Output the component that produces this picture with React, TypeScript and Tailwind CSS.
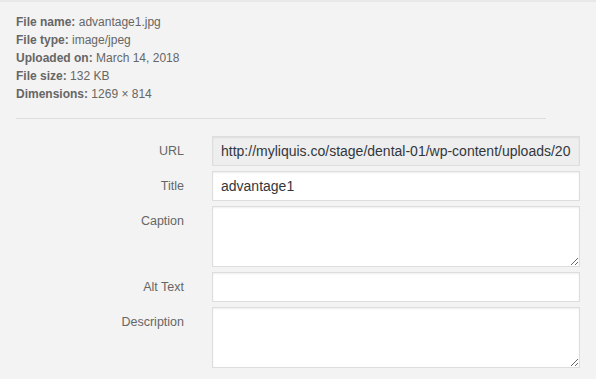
import React from 'react';

const meta: [string, string][] = [
  ['File name:', 'advantage1.jpg'],
  ['File type:', 'image/jpeg'],
  ['Uploaded on:', 'March 14, 2018'],
  ['File size:', '132 KB'],
  ['Dimensions:', '1269 × 814'],
];

const inputClass =
  'w-full h-[30px] px-2 border border-[#ddd] text-[14px] text-[#32373c] shadow-[inset_0_1px_2px_rgba(0,0,0,0.07)] outline-none';
const areaClass =
  'block w-full h-[61px] px-2 py-1 border border-[#ddd] bg-white text-[14px] text-[#32373c] shadow-[inset_0_1px_2px_rgba(0,0,0,0.07)] outline-none';

const Row: React.FC<{ label: string; children: React.ReactNode }> = ({ label, children }) => (
  <div className="flex items-start">
    <label className="w-[184px] shrink-0 text-right pt-[7px] leading-4 text-[12.5px] text-[#666]">{label}</label>
    <div className="ml-[28px] w-[368px]">{children}</div>
  </div>
);

export default function App() {
  return (
    <div
      className="w-[596px] h-[379px] overflow-hidden bg-[#f3f3f3] border-t-2 border-[#e8e8e8]"
      style={{ fontFamily: '"Liberation Sans", Arial, sans-serif' }}
    >
      {/* File details */}
      <div className="pt-[11px] px-4 text-[12px] leading-[18px] text-[#666]">
        {meta.map(([k, v]) => (
          <div key={k}>
            <span className="font-bold">{k}</span> {v}
          </div>
        ))}
      </div>

      <div className="mx-4 mt-[15px] w-[530px] border-t border-[#ddd]" />

      {/* Attachment fields */}
      <div className="mt-[17px] flex flex-col gap-[5px]">
        <Row label="URL">
          <input
            readOnly
            className={`${inputClass} bg-[#eee]`}
            value="http://myliquis.co/stage/dental-01/wp-content/uploads/2018/03/advantage1.jpg"
          />
        </Row>
        <Row label="Title">
          <input readOnly className={`${inputClass} bg-white`} value="advantage1" />
        </Row>
        <Row label="Caption">
          <textarea className={areaClass} />
        </Row>
        <Row label="Alt Text">
          <input readOnly className={`${inputClass} bg-white`} value="" />
        </Row>
        <Row label="Description">
          <textarea className={areaClass} />
        </Row>
      </div>
    </div>
  );
}
